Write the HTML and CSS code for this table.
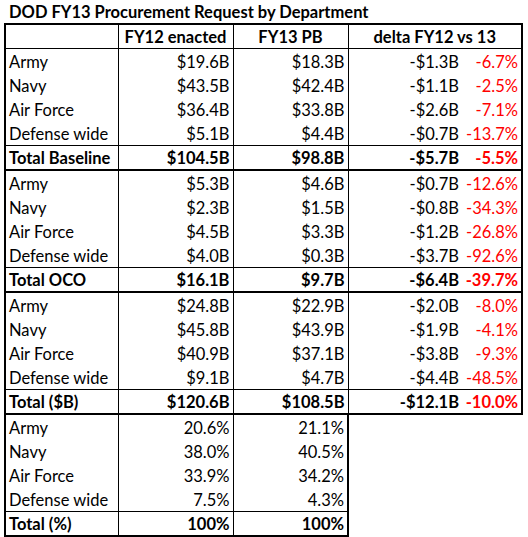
FILE: index.html
```html
<!DOCTYPE html>
<html lang="en">
<head>
    <meta charset="UTF-8">
    <title>DOD FY13 Procurement Request by Department</title>
    <link rel="stylesheet" href="styles.css">
</head>
<body>
    <h1 class="title">DOD FY13 Procurement Request by Department</h1>

    <table class="budget">
        <colgroup>
            <col class="c-name">
            <col class="c-num">
            <col class="c-num2">
            <col class="c-delta">
            <col class="c-pct">
        </colgroup>
        <thead>
            <tr class="head">
                <th class="first"></th>
                <th>FY12 enacted</th>
                <th>FY13 PB</th>
                <th colspan="2" class="last">delta FY12 vs 13</th>
            </tr>
        </thead>

        <!-- Baseline -->
        <tbody>
            <tr><td class="first">Army</td><td>$19.6B</td><td>$18.3B</td><td>-$1.3B</td><td class="red last">-6.7%</td></tr>
            <tr><td class="first">Navy</td><td>$43.5B</td><td>$42.4B</td><td>-$1.1B</td><td class="red last">-2.5%</td></tr>
            <tr><td class="first">Air Force</td><td>$36.4B</td><td>$33.8B</td><td>-$2.6B</td><td class="red last">-7.1%</td></tr>
            <tr><td class="first">Defense wide</td><td>$5.1B</td><td>$4.4B</td><td>-$0.7B</td><td class="red last">-13.7%</td></tr>
            <tr class="total"><td class="first">Total Baseline</td><td>$104.5B</td><td>$98.8B</td><td>-$5.7B</td><td class="red last">-5.5%</td></tr>
        </tbody>

        <!-- OCO -->
        <tbody>
            <tr><td class="first">Army</td><td>$5.3B</td><td>$4.6B</td><td>-$0.7B</td><td class="red last">-12.6%</td></tr>
            <tr><td class="first">Navy</td><td>$2.3B</td><td>$1.5B</td><td>-$0.8B</td><td class="red last">-34.3%</td></tr>
            <tr><td class="first">Air Force</td><td>$4.5B</td><td>$3.3B</td><td>-$1.2B</td><td class="red last">-26.8%</td></tr>
            <tr><td class="first">Defense wide</td><td>$4.0B</td><td>$0.3B</td><td>-$3.7B</td><td class="red last">-92.6%</td></tr>
            <tr class="total"><td class="first">Total OCO</td><td>$16.1B</td><td>$9.7B</td><td>-$6.4B</td><td class="red last">-39.7%</td></tr>
        </tbody>

        <!-- Total $B -->
        <tbody>
            <tr><td class="first">Army</td><td>$24.8B</td><td>$22.9B</td><td>-$2.0B</td><td class="red last">-8.0%</td></tr>
            <tr><td class="first">Navy</td><td>$45.8B</td><td>$43.9B</td><td>-$1.9B</td><td class="red last">-4.1%</td></tr>
            <tr><td class="first">Air Force</td><td>$40.9B</td><td>$37.1B</td><td>-$3.8B</td><td class="red last">-9.3%</td></tr>
            <tr><td class="first">Defense wide</td><td>$9.1B</td><td>$4.7B</td><td>-$4.4B</td><td class="red last">-48.5%</td></tr>
            <tr class="total"><td class="first">Total ($B)</td><td>$120.6B</td><td>$108.5B</td><td>-$12.1B</td><td class="red last">-10.0%</td></tr>
        </tbody>

        <!-- Share % -->
        <tbody class="share">
            <tr><td class="first">Army</td><td>20.6%</td><td class="last">21.1%</td><td class="blank" colspan="2"></td></tr>
            <tr><td class="first">Navy</td><td>38.0%</td><td class="last">40.5%</td><td class="blank" colspan="2"></td></tr>
            <tr><td class="first">Air Force</td><td>33.9%</td><td class="last">34.2%</td><td class="blank" colspan="2"></td></tr>
            <tr><td class="first">Defense wide</td><td>7.5%</td><td class="last">4.3%</td><td class="blank" colspan="2"></td></tr>
            <tr class="total"><td class="first">Total (%)</td><td>100%</td><td class="last">100%</td><td class="blank" colspan="2"></td></tr>
        </tbody>
    </table>
</body>
</html>
```

FILE: styles.css
```css
body {
    margin: 0;
    background-color: #fff;
    color: #000;
    font-family: Lato, "Open Sans", sans-serif;
    font-size: 16.5px;
}
.title {
    margin: 0;
    padding: 2px 0 0 9px;
    height: 21px;
    font-size: 16.5px;
    line-height: 20px;
    font-weight: bold;
}
.budget {
    margin-left: 4px;
    border-collapse: collapse;
    table-layout: fixed;
    width: 519px;
}
.c-name { width: 113px; }
.c-num { width: 115px; }
.c-num2 { width: 115px; }
.c-delta { width: 114px; }
.c-pct { width: 60px; }

.budget th,
.budget td {
    height: 23px;
    padding: 1px 3px 0;
    line-height: 22px;
    text-align: right;
    white-space: nowrap;
    border-left: 1px solid #000;
}
.budget td.red {
    border-left: none;
    color: #ff0000;
}
.budget th {
    height: 21px;
    text-align: center;
    font-weight: bold;
    border-top: 2px solid #000;
    border-bottom: 1px solid #000;
}
.budget .first {
    text-align: left;
    border-left: 2px solid #000;
}
.budget .last {
    border-right: 2px solid #000;
}
.total td {
    height: 21px;
    font-weight: bold;
    border-top: 1px solid #000;
    border-bottom: 2px solid #000;
}
.budget td.blank {
    border: none;
}
```
